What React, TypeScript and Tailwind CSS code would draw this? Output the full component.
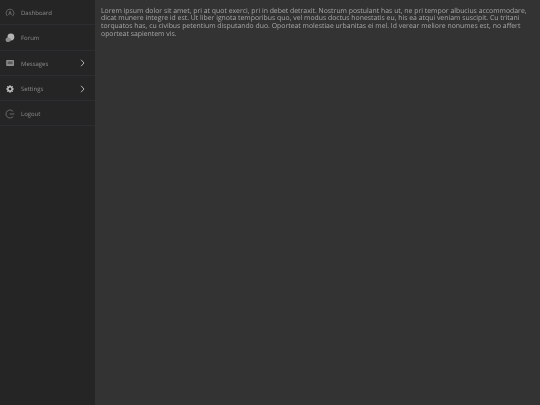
import React from 'react'

const items = [
  { label: 'Dashboard', icon: 'dash' },
  { label: 'Forum', icon: 'forum' },
  { label: 'Messages', icon: 'msg', arrow: true },
  { label: 'Settings', icon: 'gear', arrow: true },
  { label: 'Logout', icon: 'logout' },
]

function NavIcon({ name }: { name: string }) {
  if (name === 'dash') {
    return (
      <svg className="blur-[0.2px]" width="10" height="10" viewBox="0 0 10 10" fill="none" stroke="#7c7c7c" strokeWidth="0.7">
        <path d="M2.6 8.2A3.9 3.9 0 1 1 7.4 8.2" />
        <path d="M3.6 7L5 3.4L6.4 7" strokeWidth="0.8" />
      </svg>
    )
  }
  if (name === 'forum') {
    return (
      <svg className="blur-[0.2px]" width="10" height="10" viewBox="0 0 10 10" fill="#b4b4b4">
        <circle cx="5.9" cy="4" r="3.4" />
        <ellipse cx="3.2" cy="6.8" rx="2.6" ry="2.3" fill="#8c8c8c" />
      </svg>
    )
  }
  if (name === 'msg') {
    return (
      <svg className="blur-[0.2px]" width="10" height="10" viewBox="0 0 10 10">
        <rect x="1.2" y="2" width="7.8" height="6" rx="0.8" fill="#8f8f8f" />
        <rect x="2.6" y="3.4" width="5" height="2.8" fill="#5a5a5a" />
      </svg>
    )
  }
  if (name === 'gear') {
    return (
      <svg className="blur-[0.2px]" width="10" height="10" viewBox="0 0 10 10" fill="none" stroke="#c8c8c8">
        <circle cx="5" cy="5" r="2.2" strokeWidth="1.5" />
        <path d="M5 1V2.2M5 7.8V9M1 5H2.2M7.8 5H9M2.2 2.2L3 3M7 7L7.8 7.8M7.8 2.2L7 3M3 7L2.2 7.8" strokeWidth="0.9" />
      </svg>
    )
  }
  return (
    <svg className="blur-[0.2px]" width="10" height="10" viewBox="0 0 10 10" fill="none" stroke="#858585" strokeWidth="0.7">
      <path d="M8.2 2.6A4 4 0 1 0 8.2 7.4" />
      <path d="M4.6 5H9.4" />
    </svg>
  )
}

export default function App() {
  return (
    <div className="flex h-[405px] w-[540px] overflow-hidden bg-[#333333] font-['Open_Sans',sans-serif] [text-rendering:geometricPrecision]">
      <div className="h-full w-[95px] shrink-0 bg-[#252525]">
        {items.map(item => (
          <div key={item.label} className="flex h-[25.3px] items-center border-b border-[#2b2d30] pl-[5px] pr-[10px] pt-[1px]">
            <NavIcon name={item.icon} />
            <span className="ml-[6px] mt-[2px] text-[6px] text-[#8c8c8c] blur-[0.25px]">{item.label}</span>
            {item.arrow && (
              <svg className="ml-auto blur-[0.2px]" width="5" height="8" viewBox="0 0 5 8" fill="none" stroke="#b0b0b0" strokeWidth="1">
                <path d="M1 .8L4 4L1 7.2" />
              </svg>
            )}
          </div>
        ))}
      </div>
      <div className="flex-1 px-[6px] pt-[6.5px] text-[6.88px] leading-[7.7px] text-[#a8a8a8] blur-[0.25px]">
        <p className="mt-[1px]">
          Lorem ipsum dolor sit amet, pri at quot exerci, pri in debet detraxit. Nostrum postulant has ut, ne pri tempor albucius accommodare, dicat munere integre id est. Ut liber ignota temporibus quo, vel modus doctus honestatis eu, his ea atqui veniam suscipit. Cu tritani torquatos has, cu civibus petentium disputando duo. Oporteat molestiae urbanitas ei mel. Id verear meliore nonumes est, no affert oporteat sapientem vis.
        </p>
      </div>
    </div>
  )
}
